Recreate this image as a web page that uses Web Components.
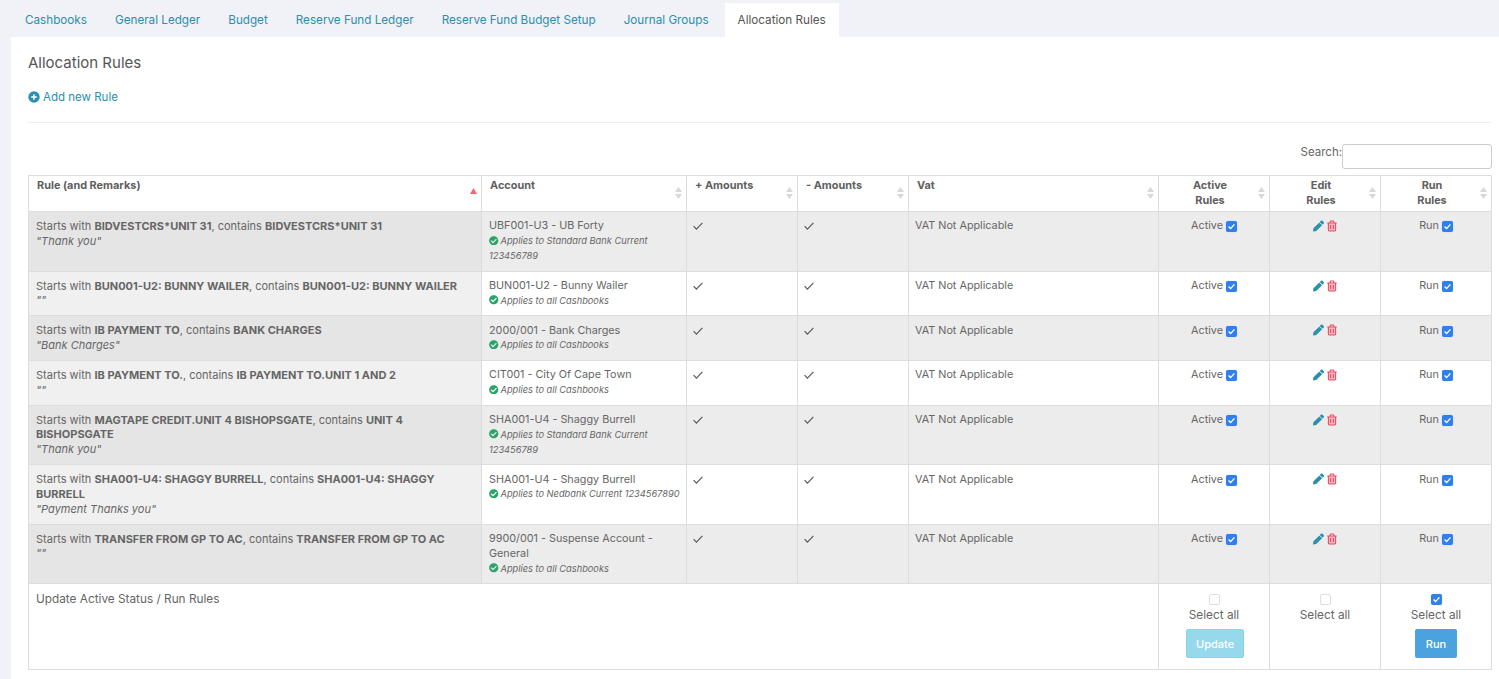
<!DOCTYPE html>
<html>
<head>
<meta charset="utf-8">
<title>Allocation Rules</title>
<style>
    html, body {
        margin: 0;
        background: #f0f2f7;
    }
    body {
        font-family: Inter, "Liberation Sans", sans-serif;
        font-size: 10.8px;
        line-height: 14.85px;
        color: #666;
        --cols: 453px 205px 111px 111px 250px 111px 111px 111px;
        --line: #ddd;
    }
</style>
</head>
<body>

<template id="icons">
    <svg id="check" viewBox="0 0 10 8"><path d="M.6 4.2l2.8 2.9L9.4.9" fill="none" stroke="currentColor" stroke-width="1.2"/></svg>
    <svg id="ok" viewBox="0 0 512 512"><path fill="currentColor" d="M504 256c0 136.967-111.033 248-248 248S8 392.967 8 256 119.033 8 256 8s248 111.033 248 248zM227.314 387.314l184-184c6.248-6.248 6.248-16.379 0-22.627l-22.627-22.627c-6.248-6.249-16.379-6.249-22.628 0L216 308.118l-70.059-70.059c-6.248-6.248-16.379-6.248-22.628 0l-22.627 22.627c-6.248 6.248-6.248 16.379 0 22.627l104 104c6.249 6.25 16.379 6.25 22.628.001z"/></svg>
</template>

<script>
const icons = document.getElementById("icons").content;
const iconHtml = (id) => icons.querySelector("#" + id).outerHTML.replace(/ id="[a-z]+"/, "");

class PageTabs extends HTMLElement {
    constructor() {
        super();
        this.attachShadow({ mode: "open" });
    }

    connectedCallback() {
        const active = this.getAttribute("active");
        const tabs = this.getAttribute("tabs").split("|");
        this.shadowRoot.innerHTML = `
            <style>
                :host { display: flex; padding: 3px 0 0 11px; height: 34px; font-size: 11.7px; }
                a { padding: 0 14px; line-height: 34px; color: #2b8fae; text-decoration: none; white-space: nowrap; }
                a.active { background: #fff; color: #555; padding: 0 13px; margin-left: 2px; }
            </style>
            ${tabs.map((t) => `<a href="#" class="${t === active ? "active" : ""}">${t}</a>`).join("")}
        `;
    }
}

class RulesPanel extends HTMLElement {
    constructor() {
        super();
        this.attachShadow({ mode: "open" });
        this.shadowRoot.innerHTML = `
            <style>
                :host { display: block; margin-left: 11px; padding: 0 7px 9px 17px; background: #fff; }
                h2 { margin: 0; padding-top: 16px; font-size: 15px; line-height: 20px; font-weight: 400; color: #555; }
                a { display: flex; align-items: center; gap: 3px; margin: 16px 0 0 0; height: 17px; font-size: 11.5px; color: #2b8fae; text-decoration: none; }
                a svg { width: 12px; height: 12px; margin-top: -1px; }
                hr { margin: 16px 1px 0 0; border: 0; border-top: 1px solid #eee; }
                .search { display: flex; justify-content: flex-end; align-items: flex-start; margin-top: 21px; height: 31px; font-size: 11.5px; line-height: 17px; }
                .search input { box-sizing: border-box; width: 150px; height: 25px; margin: 0; border: 1px solid #ccc; border-radius: 3px; background: #fff; }
                .search label { display: flex; }
            </style>
            <h2><slot name="title"></slot></h2>
            <a href="#">
                <svg viewBox="0 0 12 12"><circle cx="6" cy="6" r="5.7" fill="#2b8fae"/><path d="M6 3.2v5.6M3.2 6h5.6" stroke="#fff" stroke-width="1.5"/></svg>
                <slot name="add"></slot>
            </a>
            <hr>
            <div class="search"><label>Search:<input type="text"></label></div>
            <slot></slot>
        `;
    }
}

class RulesTable extends HTMLElement {
    constructor() {
        super();
        this.attachShadow({ mode: "open" });
        this.shadowRoot.innerHTML = `
            <style>
                :host { display: block; width: 1464px; box-sizing: border-box; border-top: 1px solid var(--line); border-left: 1px solid var(--line); }
            </style>
            <slot></slot>
        `;
    }
}

class HeadCell extends HTMLElement {
    constructor() {
        super();
        this.attachShadow({ mode: "open" });
    }

    connectedCallback() {
        const sorted = this.hasAttribute("sorted");
        this.shadowRoot.innerHTML = `
            <style>
                :host { display: block; position: relative; box-sizing: border-box; height: 36px; padding: 2px 18px 0 8px; border-right: 1px solid var(--line); border-bottom: 1px solid var(--line); font-size: 10.9px; font-weight: 700; color: #5f5f5f; }
                :host([center]) { text-align: center; padding-left: 10px; }
                svg { position: absolute; right: 4px; top: 11px; width: 7px; height: 12px; }
            </style>
            <slot></slot>
            <svg viewBox="0 0 7 12">
                ${sorted
                    ? '<path d="M3.5 1L7 7H0z" fill="#ef6a6a"/>'
                    : '<path d="M3.5 0L7 5H0zM3.5 12L0 7h7z" fill="#d8d8d8"/>'}
            </svg>
        `;
    }
}

class RuleRow extends HTMLElement {
    constructor() {
        super();
        this.attachShadow({ mode: "open" });
        this.shadowRoot.innerHTML = `
            <style>
                :host { display: grid; grid-template-columns: var(--cols); }
                .c { box-sizing: border-box; padding: 7.4px 7px 6.6px; border-right: 1px solid var(--line); border-bottom: 1px solid var(--line); background: #fff; }
                .c.first { background: #f0f0f0; font-size: 11px; padding: 7px; }
                .c.account { padding-right: 3px; }
                :host([odd]) .c { background: #ececec; }
                :host([odd]) .c.first { background: #e5e5e5; }
                .mid { text-align: center; }
                .plain { padding-left: 6px; }
                .tick { color: #5a5a5a; }
                .tick svg { display: block; width: 10px; height: 8px; margin-top: 3px; }
                .tools { display: flex; justify-content: center; gap: 3px; padding-top: 8px; }
                .tools svg { width: 11px; height: 12px; }
                .tools svg + svg { width: 10px; }
            </style>
            <div class="c first"><slot name="rule"></slot></div>
            <div class="c account"><slot name="account"></slot></div>
            <div class="c plain tick">${iconHtml("check")}</div>
            <div class="c plain tick">${iconHtml("check")}</div>
            <div class="c plain">VAT Not Applicable</div>
            <div class="c mid">Active <rule-check checked></rule-check></div>
            <div class="c tools">
                <svg viewBox="0 0 512 512"><path fill="#2b8fae" d="M497.9 142.1l-46.1 46.1c-4.7 4.7-12.3 4.7-17 0l-111-111c-4.7-4.7-4.7-12.3 0-17l46.1-46.1c18.7-18.7 49.1-18.7 67.9 0l60.1 60.1c18.8 18.7 18.8 49.1 0 67.9zM284.2 99.8L21.6 362.4.4 483.9c-2.9 16.4 11.4 30.6 27.8 27.8l121.5-21.3 262.6-262.6c4.7-4.7 4.7-12.3 0-17l-111-111c-4.8-4.7-12.4-4.7-17.1 0z"/></svg>
                <svg viewBox="0 0 11 12"><path d="M1.5 3v7.5c0 .6.4 1 1 1h6c.6 0 1-.4 1-1V3z" fill="#f6b8c1"/><path d="M1.5 3v7.5c0 .6.4 1 1 1h6c.6 0 1-.4 1-1V3M.3 2.6h10.4M3.5 2.4V1.2c0-.4.3-.7.7-.7h2.6c.4 0 .7.3.7.7v1.2M4 4.8v4.6M7 4.8v4.6" fill="none" stroke="#e8485f" stroke-width="1.15"/></svg>
            </div>
            <div class="c mid">Run <rule-check checked></rule-check></div>
        `;
    }
}

class RuleCheck extends HTMLElement {
    constructor() {
        super();
        this.attachShadow({ mode: "open" });
    }

    connectedCallback() {
        const checked = this.hasAttribute("checked");
        this.shadowRoot.innerHTML = `
            <style>
                :host { display: inline-block; box-sizing: border-box; width: 11px; height: 11px; vertical-align: -3px; border-radius: 2px; border: 1px solid #ddd; background: #fff; }
                :host([checked]) { border: 0; background: #2f80ed; box-shadow: 0 0 1px #8ab8f5; }
                svg { display: block; width: 11px; height: 11px; }
            </style>
            ${checked ? '<svg viewBox="0 0 11 11"><path d="M2.6 5.6l2 2 3.8-4.2" fill="none" stroke="#fff" stroke-width="1.4"/></svg>' : ""}
        `;
    }
}

class AppliesNote extends HTMLElement {
    constructor() {
        super();
        this.attachShadow({ mode: "open" });
        this.shadowRoot.innerHTML = `
            <style>
                :host { display: block; font-size: 9.25px; font-style: italic; }
                svg { width: 9.5px; height: 9.5px; vertical-align: -1px; color: #2ba36b; margin-right: 2px; }
            </style>
            ${iconHtml("ok")}<slot></slot>
        `;
    }
}

class FootRow extends HTMLElement {
    constructor() {
        super();
        this.attachShadow({ mode: "open" });
        this.shadowRoot.innerHTML = `
            <style>
                :host { display: grid; grid-template-columns: 1130px 111px 111px 111px; height: 86px; }
                .c { box-sizing: border-box; padding: 7px; border-right: 1px solid var(--line); border-bottom: 1px solid var(--line); text-align: center; font-size: 11.8px; }
                .c.lead { text-align: left; padding-top: 8px; }
                rule-check { display: block; margin: 3px auto 3px; }
                button { display: block; margin: 6px auto 0; height: 29px; padding: 0 9px; border: 1px solid transparent; border-radius: 2px; color: #fff; font: 500 11px Inter, sans-serif; }
                .update { background: #96d8ec; border-color: #8dd3e8; width: 58px; margin-left: 20px; }
                .run { background: #4aa3df; width: 42px; padding: 0; }
            </style>
            <div class="c lead"><slot></slot></div>
            <div class="c"><rule-check></rule-check>Select all<button class="update">Update</button></div>
            <div class="c"><rule-check></rule-check>Select all</div>
            <div class="c"><rule-check checked></rule-check>Select all<button class="run">Run</button></div>
        `;
    }
}

class HeadRow extends HTMLElement {
    constructor() {
        super();
        this.attachShadow({ mode: "open" });
        this.shadowRoot.innerHTML = `
            <style>:host { display: grid; grid-template-columns: var(--cols); }</style>
            <slot></slot>
        `;
    }
}

customElements.define("page-tabs", PageTabs);
customElements.define("rules-panel", RulesPanel);
customElements.define("rules-table", RulesTable);
customElements.define("head-row", HeadRow);
customElements.define("head-cell", HeadCell);
customElements.define("rule-check", RuleCheck);
customElements.define("applies-note", AppliesNote);
customElements.define("rule-row", RuleRow);
customElements.define("foot-row", FootRow);
</script>

<page-tabs active="Allocation Rules" tabs="Cashbooks|General Ledger|Budget|Reserve Fund Ledger|Reserve Fund Budget Setup|Journal Groups|Allocation Rules"></page-tabs>

<rules-panel>
    <span slot="title">Allocation Rules</span>
    <span slot="add">Add new Rule</span>
    <rules-table>
        <head-row>
            <head-cell sorted>Rule (and Remarks)</head-cell>
            <head-cell>Account</head-cell>
            <head-cell>+ Amounts</head-cell>
            <head-cell>- Amounts</head-cell>
            <head-cell>Vat</head-cell>
            <head-cell center>Active<br>Rules</head-cell>
            <head-cell center>Edit<br>Rules</head-cell>
            <head-cell center>Run<br>Rules</head-cell>
        </head-row>

        <rule-row odd>
            <div slot="rule">Starts with <b>BIDVESTCRS*UNIT 31</b>, contains <b>BIDVESTCRS*UNIT 31</b><br><i>"Thank you"</i></div>
            <div slot="account">UBF001-U3 - UB Forty<applies-note>Applies to Standard Bank Current 123456789</applies-note></div>
        </rule-row>
        <rule-row>
            <div slot="rule">Starts with <b>BUN001-U2: BUNNY WAILER</b>, contains <b>BUN001-U2: BUNNY WAILER</b><br><i>""</i></div>
            <div slot="account">BUN001-U2 - Bunny Wailer<applies-note>Applies to all Cashbooks</applies-note></div>
        </rule-row>
        <rule-row odd>
            <div slot="rule">Starts with <b>IB PAYMENT TO</b>, contains <b>BANK CHARGES</b><br><i>"Bank Charges"</i></div>
            <div slot="account">2000/001 - Bank Charges<applies-note>Applies to all Cashbooks</applies-note></div>
        </rule-row>
        <rule-row>
            <div slot="rule">Starts with <b>IB PAYMENT TO.</b>, contains <b>IB PAYMENT TO.UNIT 1 AND 2</b><br><i>""</i></div>
            <div slot="account">CIT001 - City Of Cape Town<applies-note>Applies to all Cashbooks</applies-note></div>
        </rule-row>
        <rule-row odd>
            <div slot="rule">Starts with <b>MAGTAPE CREDIT.UNIT 4 BISHOPSGATE</b>, contains <b>UNIT 4</b> <b>BISHOPSGATE</b><br><i>"Thank you"</i></div>
            <div slot="account">SHA001-U4 - Shaggy Burrell<applies-note>Applies to Standard Bank Current 123456789</applies-note></div>
        </rule-row>
        <rule-row>
            <div slot="rule">Starts with <b>SHA001-U4: SHAGGY BURRELL</b>, contains <b>SHA001-U4: SHAGGY</b> <b>BURRELL</b><br><i>"Payment Thanks you"</i></div>
            <div slot="account">SHA001-U4 - Shaggy Burrell<applies-note>Applies to Nedbank Current 1234567890</applies-note></div>
        </rule-row>
        <rule-row odd>
            <div slot="rule">Starts with <b>TRANSFER FROM GP TO AC</b>, contains <b>TRANSFER FROM GP TO AC</b><br><i>""</i></div>
            <div slot="account">9900/001 - Suspense Account - General<applies-note>Applies to all Cashbooks</applies-note></div>
        </rule-row>

        <foot-row>Update Active Status / Run Rules</foot-row>
    </rules-table>
</rules-panel>

</body>
</html>
